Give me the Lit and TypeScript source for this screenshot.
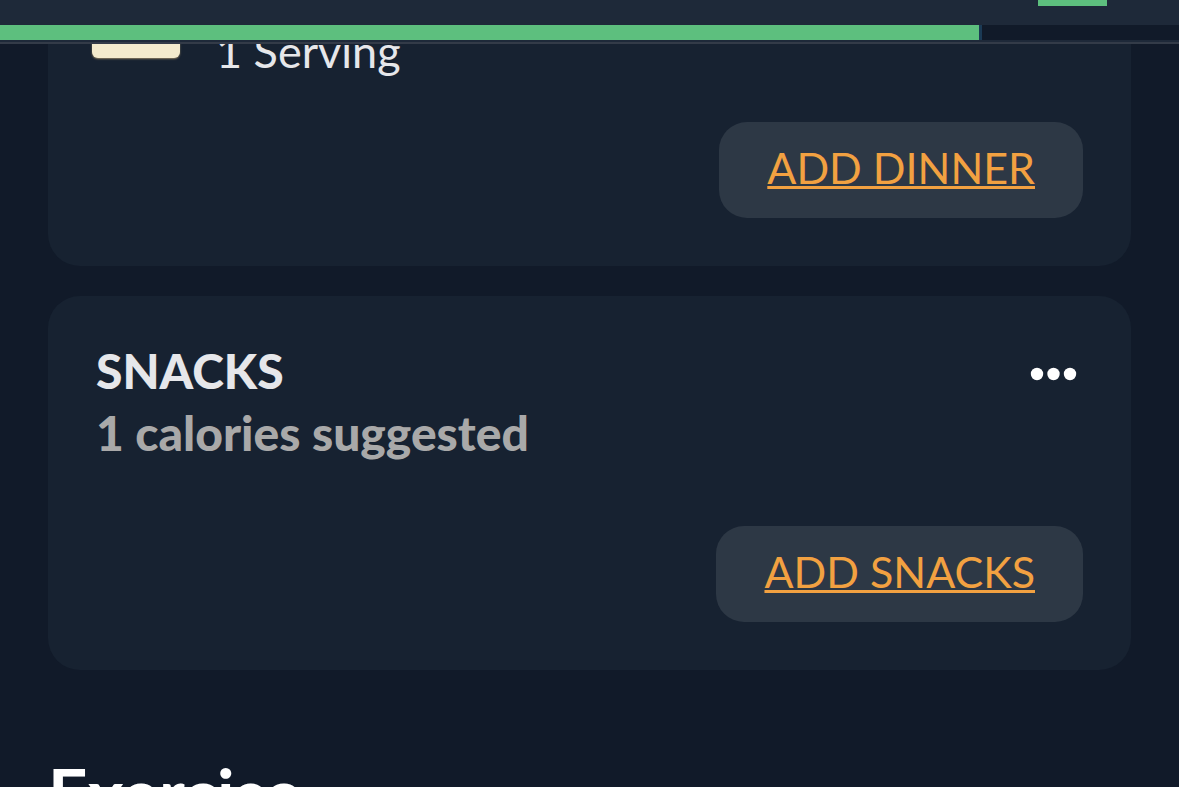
import { LitElement, html, css } from "lit";
import { customElement, property } from "lit/decorators.js";

/** Sticky summary bar: today's day marker and the calorie budget progress. */
@customElement("diary-header")
export class DiaryHeader extends LitElement {
  @property({ type: Number }) percent = 0;

  static styles = css`
    :host { display: block; background: #1e2939; }
    .days { display: flex; justify-content: flex-end; height: 25px; padding-right: 72px; }
    .marker { width: 69px; height: 6px; background: #5dbf7e; }
    .track { height: 15px; background: #111a29; }
    .fill { box-sizing: border-box; height: 100%; background: #5dbf7e; border-right: 3px solid #1b3a55; }
    .edge { height: 2px; border-bottom: 2px solid #333b48; }
  `;

  render() {
    return html`
      <div class="days"><div class="marker"></div></div>
      <div class="track" role="progressbar" aria-label="Calorie budget" aria-valuenow=${Math.round(this.percent)}>
        <div class="fill" style="width:${this.percent}%"></div>
      </div>
      <div class="edge"></div>
    `;
  }
}

@customElement("app-root")
export class AppRoot extends LitElement {
  static styles = css`
    :host {
      display: block;
      position: relative;
      height: 100vh;
      overflow: hidden;
      background: #111a29;
      color: #e6e7ea;
      font-family: Lato, "Open Sans", sans-serif;
      font-size: 43px;
    }
    diary-header { position: absolute; top: 0; left: 0; right: 0; z-index: 1; }
    .diary { display: flex; flex-direction: column; gap: 30px; padding: 0 48px; }
    .card { display: flex; flex-direction: column; padding: 44px 48px 48px; border-radius: 32px; background: #172231; }
    /* The dinner card is partly scrolled under the header. */
    .scrolled { margin-top: -74px; }
    .food { display: flex; align-items: flex-end; gap: 36px; margin: 0 -4px 40px; }
    .thumb { width: 88px; height: 88px; margin-bottom: 24px; border-radius: 6px; background: #f3ebcd; box-shadow: 0 1px 2px #8b7d60; }
    .serving { font-size: 45px; line-height: 62px; }
    .head { display: flex; justify-content: space-between; align-items: flex-start; margin-bottom: 62px; }
    .title, .hint { margin: 0; font-size: 48px; line-height: 62px; font-weight: 900; }
    .hint { color: #a9a9a9; }
    .more { display: flex; padding: 27px 6px 19px; margin: 0; border: 0; background: none; }
    .dots { display: block; width: 47px; height: 14px; fill: #fff; }
    .add {
      align-self: flex-end;
      padding: 21px 48px 25px;
      border: 0;
      border-radius: 28px;
      background: #2d3845;
      color: #f2a141;
      font: inherit;
      line-height: 50px;
      text-decoration: underline;
      text-decoration-thickness: 3px;
      text-underline-offset: 2px;
      text-decoration-skip-ink: none;
    }
    .section { margin: 52px 0 0; color: #fff; font-size: 69px; line-height: 82px; font-weight: 700; }
  `;

  render() {
    return html`
      <diary-header .percent=${83.3}></diary-header>
      <main class="diary">
        <section class="card scrolled" aria-label="Dinner">
          <div class="food">
            <div class="thumb"></div>
            <div class="serving">1 Serving</div>
          </div>
          <button class="add">ADD DINNER</button>
        </section>
        <section class="card">
          <div class="head">
            <div>
              <h2 class="title">SNACKS</h2>
              <p class="hint">1 calories suggested</p>
            </div>
            <button class="more" aria-label="Snacks options">
              <svg class="dots" viewBox="0 0 47 14">
                <circle cx="7" cy="7" r="6.2" /><circle cx="23.5" cy="7" r="6.2" /><circle cx="40" cy="7" r="6.2" />
              </svg>
            </button>
          </div>
          <button class="add">ADD SNACKS</button>
        </section>
        <h1 class="section">Exercise</h1>
      </main>
    `;
  }
}
